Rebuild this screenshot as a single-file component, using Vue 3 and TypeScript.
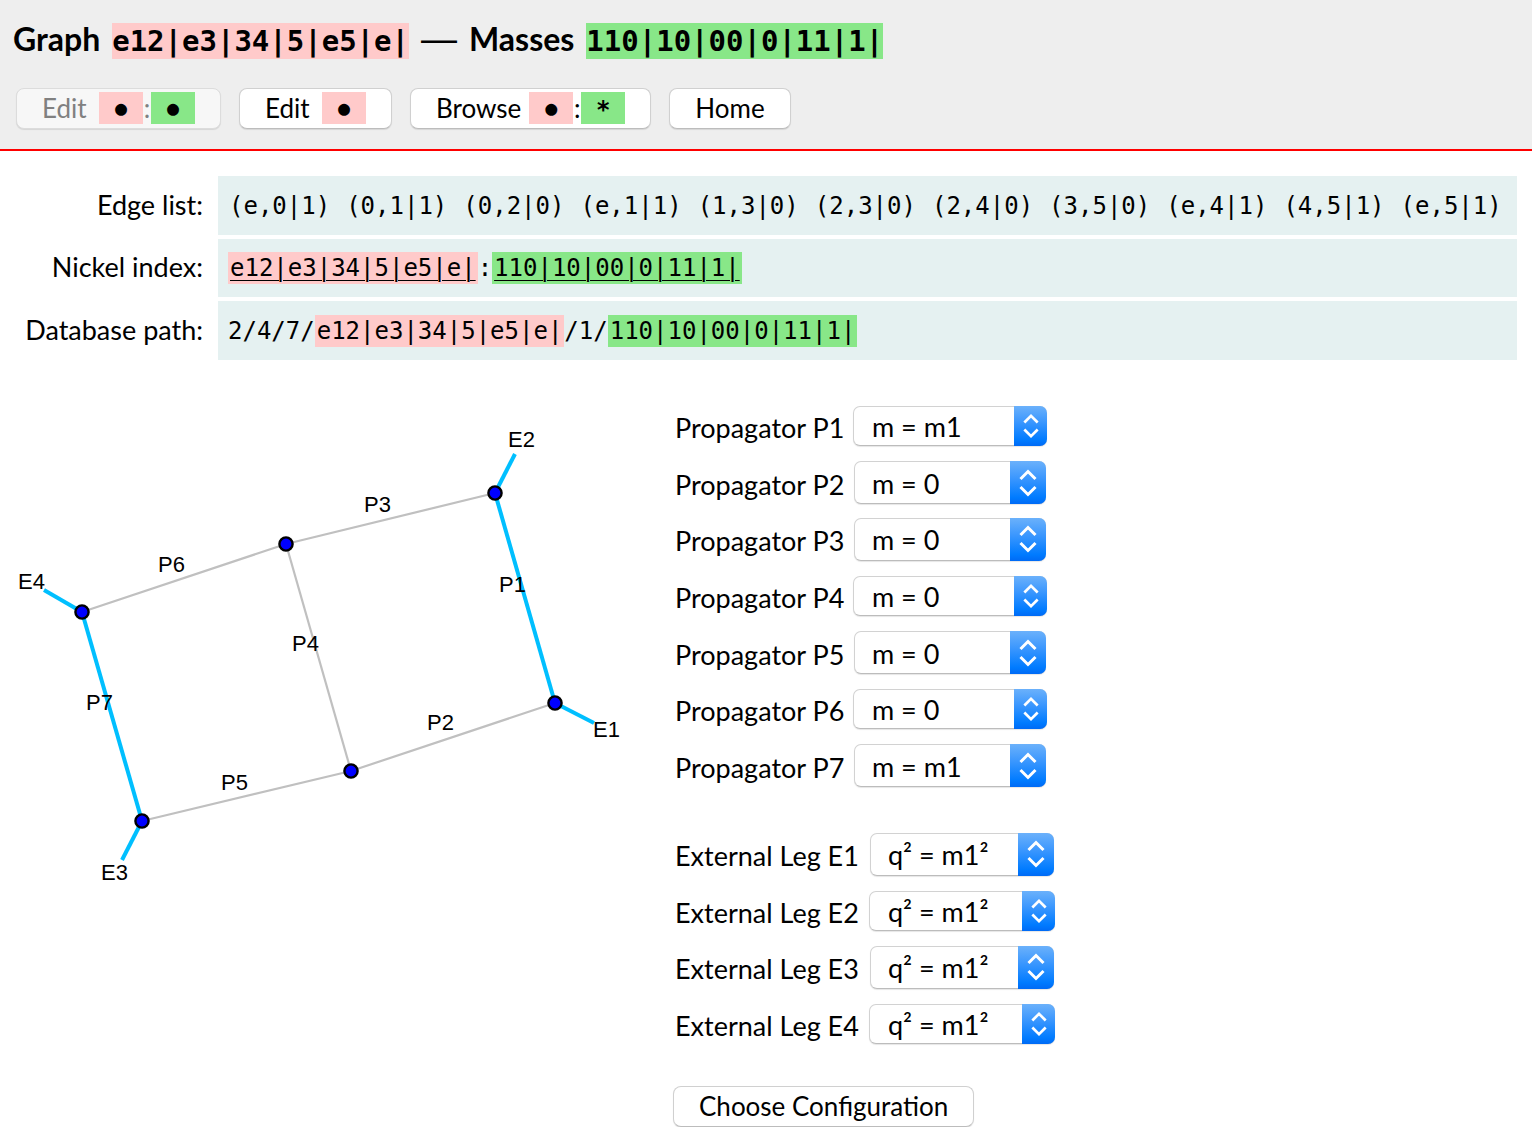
<script setup lang="ts">
import { reactive } from 'vue'

interface Field {
  id: string
  label: string
  value: string
  compact: boolean
}
interface Edge {
  from: [number, number]
  to: [number, number]
  massive: boolean
}
interface Tag {
  text: string
  x: number
  y: number
}

const graph = 'e12|e3|34|5|e5|e|'
const masses = '110|10|00|0|11|1|'

const edgeList = [
  '(e,0|1)', '(0,1|1)', '(0,2|0)', '(e,1|1)', '(1,3|0)', '(2,3|0)',
  '(2,4|0)', '(3,5|0)', '(e,4|1)', '(4,5|1)', '(e,5|1)',
]

const propagators = reactive<Field[]>(
  [1, 0, 0, 0, 0, 0, 1].map((mass, i) => ({
    id: `p${i + 1}`,
    label: `Propagator P${i + 1}`,
    value: mass ? 'm = m1' : 'm = 0',
    compact: [0, 3, 5].includes(i),
  })),
)
const legs = reactive<Field[]>(
  [1, 2, 3, 4].map((n) => ({
    id: `e${n}`,
    label: `External Leg E${n}`,
    value: 'q² = m1²',
    compact: n % 2 === 0,
  })),
)

const groups = [
  { name: 'propagators', fields: propagators, options: ['m = 0', 'm = m1'] },
  { name: 'legs', fields: legs, options: ['q² = 0', 'q² = m1²'] },
]

const nodes: [number, number][] = [
  [82, 612], [286, 544], [495, 493], [555, 703], [351, 771], [142, 821],
]
const edges: Edge[] = [
  { from: nodes[0], to: nodes[1], massive: false },
  { from: nodes[1], to: nodes[2], massive: false },
  { from: nodes[1], to: nodes[4], massive: false },
  { from: nodes[3], to: nodes[4], massive: false },
  { from: nodes[4], to: nodes[5], massive: false },
  { from: nodes[2], to: nodes[3], massive: true },
  { from: nodes[0], to: nodes[5], massive: true },
  { from: nodes[0], to: [44, 590], massive: true },
  { from: nodes[2], to: [515, 454], massive: true },
  { from: nodes[3], to: [594, 723], massive: true },
  { from: nodes[5], to: [122, 860], massive: true },
]
const tags: Tag[] = [
  { text: 'E1', x: 593, y: 737 },
  { text: 'E2', x: 508, y: 447 },
  { text: 'E3', x: 101, y: 880 },
  { text: 'E4', x: 18, y: 589 },
  { text: 'P1', x: 499, y: 592 },
  { text: 'P2', x: 427, y: 730 },
  { text: 'P3', x: 364, y: 512 },
  { text: 'P4', x: 292, y: 651 },
  { text: 'P5', x: 221, y: 790 },
  { text: 'P6', x: 158, y: 572 },
  { text: 'P7', x: 86, y: 710 },
]
</script>

<template>
  <div class="page">
    <header class="top">
      <h1>
        <span>Graph</span>
        <code class="graph">{{ graph }}</code>
        <span class="dash">—</span>
        <span>Masses</span>
        <code class="mass">{{ masses }}</code>
      </h1>
      <nav class="actions">
        <button type="button" class="btn" disabled>
          <span class="word">Edit</span><code class="pill graph">●</code><span class="colon">:</span><code class="pill mass">●</code>
        </button>
        <button type="button" class="btn">
          <span class="word">Edit</span><code class="pill graph">●</code>
        </button>
        <button type="button" class="btn">
          <span class="word">Browse</span><code class="pill graph">●</code><span class="colon">:</span><code class="pill star mass">*</code>
        </button>
        <button type="button" class="btn">Home</button>
      </nav>
    </header>

    <table class="info">
      <tbody>
        <tr>
          <th scope="row">Edge list:</th>
          <td>
            <div class="edges">
              <code v-for="edge in edgeList" :key="edge">{{ edge }}</code>
            </div>
          </td>
        </tr>
        <tr>
          <th scope="row">Nickel index:</th>
          <td>
            <a class="nickel" href="#nickel"><code class="graph">{{ graph }}</code><code>:</code><code class="mass">{{ masses }}</code></a>
          </td>
        </tr>
        <tr>
          <th scope="row">Database path:</th>
          <td>
            <code>2/4/7/</code><code class="graph">{{ graph }}</code><code>/1/</code><code class="mass">{{ masses }}</code>
          </td>
        </tr>
      </tbody>
    </table>

    <main class="body">
      <svg class="diagram" viewBox="0 398 660 500" role="img" aria-label="Feynman graph">
        <line
          v-for="(e, i) in edges"
          :key="i"
          :class="e.massive ? 'massive' : 'massless'"
          :x1="e.from[0]"
          :y1="e.from[1]"
          :x2="e.to[0]"
          :y2="e.to[1]"
        />
        <circle v-for="(n, i) in nodes" :key="i" :cx="n[0]" :cy="n[1]" r="6.6" />
        <text v-for="t in tags" :key="t.text" :x="t.x" :y="t.y">{{ t.text }}</text>
      </svg>

      <form class="config" @submit.prevent>
        <div v-for="g in groups" :key="g.name" class="group" :class="g.name">
          <div v-for="f in g.fields" :key="f.id" class="field">
            <label :for="f.id">{{ f.label }}</label>
            <div class="picker" :class="{ compact: f.compact }">
              <select :id="f.id" v-model="f.value">
                <option v-for="o in g.options" :key="o" :value="o">{{ o }}</option>
              </select>
              <span class="arrows">
                <svg viewBox="0 0 18 28" aria-hidden="true">
                  <path d="M1.500 10 9 2.500l7.500 7.500M1.500 18l7.500 7.500 7.500-7.500" />
                </svg>
              </span>
            </div>
          </div>
        </div>
        <button type="submit" class="btn">Choose Configuration</button>
      </form>
    </main>
  </div>
</template>

<style>
body {
  margin: 0;
  background: #fff;
}
</style>

<style scoped>
.page {
  font-family: Lato, sans-serif;
  font-size: 27px;
  line-height: 32px;
  color: #000;
}
code {
  font-family: 'DejaVu Sans Mono', monospace;
  font-size: 24px;
}
.graph {
  background: #ffcaca;
}
.mass {
  background: #88e788;
}

.top {
  background: #eee;
  border-bottom: 2px solid #f00;
  padding: 23px 16px 20px 13px;
}
h1 {
  display: flex;
  align-items: flex-start;
  gap: 12px;
  margin: 0 0 29px;
  font-size: 32px;
  line-height: 32px;
}
h1 code {
  font-size: 29px;
  line-height: 36px;
}
.dash {
  font-family: 'Liberation Sans', Arial, sans-serif;
  font-size: 36px;
  font-weight: 400;
}
.actions {
  display: flex;
  gap: 18px;
  margin-left: 3px;
}
.btn {
  display: flex;
  align-items: center;
  box-sizing: border-box;
  height: 41px;
  padding: 0 25px 2px;
  border: 1px solid #d0d0d0;
  border-bottom-color: #bcbcbc;
  border-radius: 8px;
  background: #fff;
  box-shadow: 0 1px 1px rgba(0, 0, 0, 0.1);
  color: #000;
  font: inherit;
  font-size: 26px;
}
.btn:disabled {
  background: #f7f7f7;
  border-color: #dcdcdc;
  color: #808080;
}
.word {
  min-width: 49px;
  margin-right: 8px;
  text-align: left;
}
.pill {
  width: 44px;
  height: 32px;
  color: #000;
  font-size: 20px;
  line-height: 32px;
  text-align: center;
}
.star {
  font-size: 24px;
  font-weight: 700;
  line-height: 36px;
}
.colon {
  width: 8px;
  text-align: center;
}

.info {
  width: calc(100% - 11px);
  margin-top: 21px;
  border-collapse: separate;
  border-spacing: 4px;
}
th {
  width: 199px;
  padding: 0 11px 2px 0;
  font-weight: 400;
  text-align: right;
}
td {
  height: 57px;
  padding: 0 10px 2px;
  background: #e5f1f1;
  white-space: nowrap;
}
tr:nth-child(2) td {
  height: 56px;
}
td code.graph,
td code.mass {
  display: inline-block;
  padding: 0 2px;
}
.edges {
  display: flex;
  gap: 16px;
  padding: 2px 0 0 1px;
}
.nickel {
  color: inherit;
  text-decoration: none;
}
.nickel code.graph,
.nickel code.mass {
  text-decoration: underline;
  text-decoration-thickness: 1px;
  text-underline-offset: 4px;
}

.body {
  display: flex;
  align-items: flex-start;
  gap: 13px;
  margin-top: 34px;
}
.diagram {
  flex: none;
  width: 660px;
}
.diagram .massless {
  stroke: #c0c0c0;
  stroke-width: 2.2;
}
.diagram .massive {
  stroke: #00bfff;
  stroke-width: 4;
}
.diagram circle {
  fill: #00f;
  stroke: #000;
  stroke-width: 2.4;
}
.diagram text {
  font-family: 'Liberation Sans', Arial, sans-serif;
  font-size: 22px;
}

.group {
  display: grid;
  grid-auto-rows: 1fr;
  padding-left: 2px;
}
.propagators {
  height: 396px;
  margin-bottom: 32px;
}
.legs {
  height: 226px;
  margin-bottom: 34px;
}
.field {
  display: flex;
  align-items: center;
}
.field label {
  width: 178px;
  padding-top: 4px;
}
.legs label {
  width: 194px;
}
.picker {
  position: relative;
  box-sizing: border-box;
  width: 194px;
  padding: 0 1px;
}
.legs .picker {
  width: 186px;
}
.picker.compact {
  padding: 0;
}
select {
  display: block;
  box-sizing: border-box;
  width: 100%;
  height: 43px;
  padding: 2px 36px 0 17px;
  border: 1px solid #d2d2d2;
  border-bottom-color: #bcbcbc;
  border-radius: 7px;
  background: #fff;
  box-shadow: 0 1px 1px rgba(0, 0, 0, 0.1);
  color: #000;
  font: inherit;
  appearance: none;
}
.compact select {
  height: 40px;
  padding-left: 18px;
}
.arrows {
  position: absolute;
  top: 0;
  right: 1px;
  bottom: 0;
  display: flex;
  align-items: center;
  justify-content: center;
  width: 36px;
  border-radius: 0 7px 7px 0;
  background: linear-gradient(#6bb1fb, #3b97fe 40%, #007bff 85%, #006af5);
  pointer-events: none;
}
.compact .arrows {
  right: 0;
  width: 33px;
}
.arrows svg {
  width: 18px;
  height: 28px;
  fill: none;
  stroke: #fff;
  stroke-width: 3;
}
.compact .arrows svg {
  width: 16px;
  height: 26px;
}
</style>
